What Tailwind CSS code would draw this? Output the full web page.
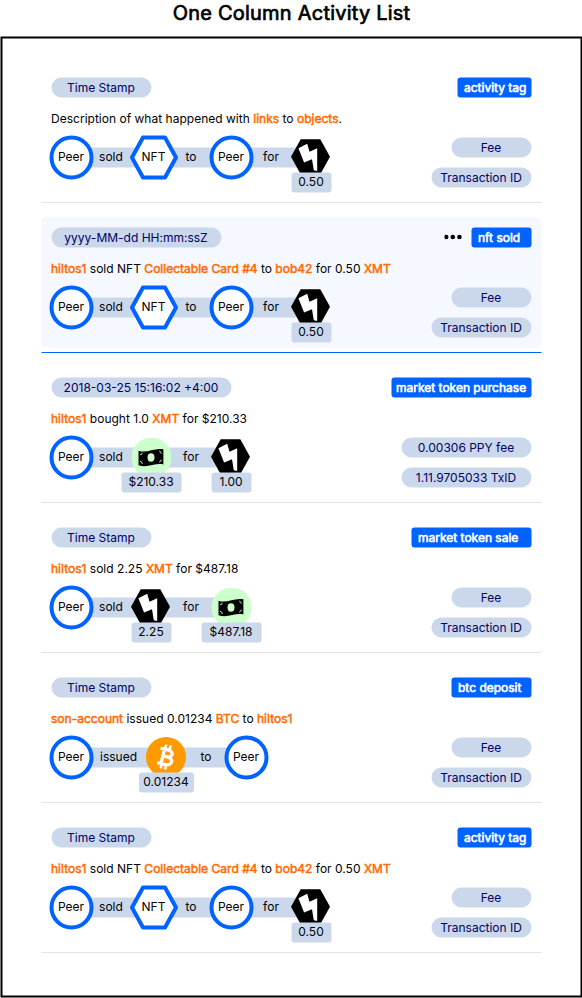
<!DOCTYPE html>
<html lang="en">
<head>
<meta charset="utf-8">
<title>One Column Activity List</title>
<script src="https://cdn.jsdelivr.net/npm/@tailwindcss/browser@4"></script>
</head>
<body class="bg-white overflow-hidden font-['Inter','Liberation_Sans',sans-serif] text-[12px] leading-5 text-black">
<svg class="hidden">
  <symbol id="peer" viewBox="0 0 40 40" overflow="visible"><circle cx="20" cy="20" r="20" fill="#fff" stroke="#0062ff" stroke-width="4"/></symbol>
  <symbol id="nft" viewBox="0 0 45 40" overflow="visible"><path d="M11.5 0H33.5L44.5 20L33.5 40H11.5L.5 20Z" fill="#fff" stroke="#0062ff" stroke-width="4" stroke-linejoin="round"/></symbol>
  <symbol id="token" viewBox="0 0 40 40" overflow="visible"><g transform="translate(-.5 0)"><path d="M9.7 1.8H29.3L39 19.2L29.3 36.7H9.7L0 19.2Z"/><path d="M7.4 10.7L16.2 6.3L18.5 14.3L26.2 10.7V33.5L22.8 32.7L21 21.8L13.1 25Z" fill="#fff"/></g></symbol>
  <symbol id="cash" viewBox="0 0 40 40"><circle cx="20" cy="20" r="20" fill="#cfc"/><path d="M7 13.2C15 16.5 23 9.7 31.9 11.8V27C24 25 16 31 7 27.8Z"/><ellipse cx="19.5" cy="20" rx="3.5" ry="4.2" fill="#cfc"/><g fill="none" stroke="#cfc" stroke-width=".9"><path d="M8.5 17.3Q10.7 17.3 10.8 15.3M30.3 15.8Q28.3 15.7 28.2 13.2M8.5 23.8Q10.8 24 10.8 26.6M30.3 22.4Q28.3 22.8 28.2 25"/></g></symbol>
  <symbol id="btc" viewBox="0 0 40 40" overflow="visible"><circle cx="19.5" cy="19.5" r="20" fill="#ff9900"/><g transform="translate(-.8 -.5) rotate(13 20 20)" fill="none" stroke="#fff"><path d="M13 12.6H21.3C27 12.6 27 19.5 21.3 19.5H17M21.3 19.5C28.6 19.5 28.6 27.4 21.5 27.4H13M17 12.6V27.4" stroke-width="3.4"/><path d="M17.7 7.7V12M22.2 7.7V12M17.7 28V32.3M22.2 28V32.3" stroke-width="2.6"/></g></symbol>
</svg>
<main class="w-[582px] h-[998px] translate-x-[0.5px] translate-y-[0.5px] flex flex-col">
  <h1 class="h-[36px] shrink-0 text-center text-[20px] leading-6 font-normal tracking-[0.22px] [-webkit-text-stroke:0.7px_#000]">One Column Activity List</h1>
  <div id="list" class="w-[582px] h-[961px] shrink-0 border-2 border-black pl-[39px] pt-[15px]"></div>
</main>
<script>
const L = t => `<b class="font-normal text-[#ff6a00] [-webkit-text-stroke:0.5px_#ff6a00]">${t}</b>`;
const node = (id, w, text, label, lw) => `<div class="relative w-10 h-10 shrink-0"><svg class="block h-10 overflow-visible" style="width:${w}px"><use href="#${id}" width="${w}" height="40"/></svg>${text ? `<span class="absolute -left-[0.5px] top-[9px] text-center" style="width:${w}px">${text}</span>` : ''}${label ? `<span class="absolute top-[35px] left-1/2 -translate-x-1/2 h-5 rounded-[3px] bg-[#cbd8eb] text-center leading-[18px] pr-px" style="width:${lw}px">${label}</span>` : ''}</div>`;
const peer = node('peer', 40, 'Peer'), nft = node('nft', 45, 'NFT');
const token = v => node('token', 40, '', v, 40);
const cash = v => node('cash', 40, '', v, 60);
const link = (t, w = 40) => `<span class="h-5 text-center shrink-0 leading-[18px] pr-px" style="width:${w}px">${t}</span>`;
const full = () => peer + link('sold') + nft + link('to') + peer + link('for') + token('0.50');
const nftText = `${L('hiltos1')} sold NFT ${L('Collectable Card #4')} to ${L('bob42')} for 0.50 ${L('XMT')}`;
const rows = [
  {t:'Time Stamp', w:100, tag:'activity tag', tw:74, d:`Description of what happened with ${L('links')} to ${L('objects')}.`, g:full(), gw:240},
  {t:'yyyy-MM-dd HH:mm:ssZ', w:170, tag:'nft sold', tw:60, d:nftText, g:full(), gw:240, on:true},
  {t:'2018-03-25 15:16:02 +4:00', w:180, tag:'market token purchase', tw:140, pl:4.5, d:`${L('hiltos1')} bought 1.0 ${L('XMT')} for $210.33`, g:peer+link('sold')+cash('$210.33')+link('for')+token('1.00'), gw:160, fee:'0.00306 PPY fee', fw:130, tx:'1.11.9705033 TxID', xw:130},
  {t:'Time Stamp', w:100, tag:'market token sale', tw:120, d:`${L('hiltos1')} sold 2.25 ${L('XMT')} for $487.18`, g:peer+link('sold')+token('2.25')+link('for')+cash('$487.18'), gw:160},
  {t:'Time Stamp', w:100, tag:'btc deposit', tw:80, d:`${L('son-account')} issued 0.01234 ${L('BTC')} to ${L('hiltos1')}`, g:peer+link('issued',55)+node('btc',40,'','0.01234',55)+link('to')+peer, gw:175},
  {t:'Time Stamp', w:100, tag:'activity tag', tw:74, d:nftText, g:full(), gw:240}
];
const pill = (t, w) => `<span class="block h-5 rounded-full bg-[#cbd8eb] text-[#000066] text-center pr-px" style="width:${w}px">${t}</span>`;
document.getElementById('list').innerHTML = rows.map(r => `
<section class="h-[150px] w-[500px] pt-[14px] flex flex-col">
  <div class="h-[130px] rounded-[4px] px-[10px] pt-[10px] ${r.on ? 'bg-[#f5f8ff]' : ''}">
    <div class="flex items-center h-5">${pill(r.t, r.w)}
      <div class="ml-auto flex items-center gap-[9px]">
        ${r.on ? '<svg class="w-[18px] h-5" viewBox="0 0 18 20"><circle cx="1.7" cy="9.5" r="2.3"/><circle cx="8.3" cy="9.5" r="2.3"/><circle cx="14.9" cy="9.5" r="2.3"/></svg>' : ''}
        <span class="block h-5 rounded-[3px] bg-[#0062ff] text-white [-webkit-text-stroke:0.6px_#fff] whitespace-nowrap leading-[19px]" style="width:${r.tw}px;padding-left:${r.pl || 6.5}px">${r.tag}</span>
      </div>
    </div>
    <p class="mt-[11px] -ml-[0.5px] whitespace-nowrap tracking-[0.015px]">${r.d}</p>
    <div class="flex justify-between h-[60px] -mt-[1px]">
      <div class="relative flex items-center h-10 mt-[10px]">
        <span class="absolute left-5 top-[10px] h-5 bg-[#cbd8eb]" style="width:${r.gw}px"></span>
        <div class="relative flex items-center">${r.g}</div>
      </div>
      <div class="flex flex-col items-end gap-[10px] mt-[10px]">${pill(r.fee || 'Fee', r.fw || 80)}${pill(r.tx || 'Transaction ID', r.xw || 100)}</div>
    </div>
  </div>
  <hr class="border-0 h-px mt-auto -translate-y-[0.5px] ${r.on ? 'bg-[#0062ff]' : 'bg-[#e3e3e3]'}">
</section>`).join('');
</script>
</body>
</html>
